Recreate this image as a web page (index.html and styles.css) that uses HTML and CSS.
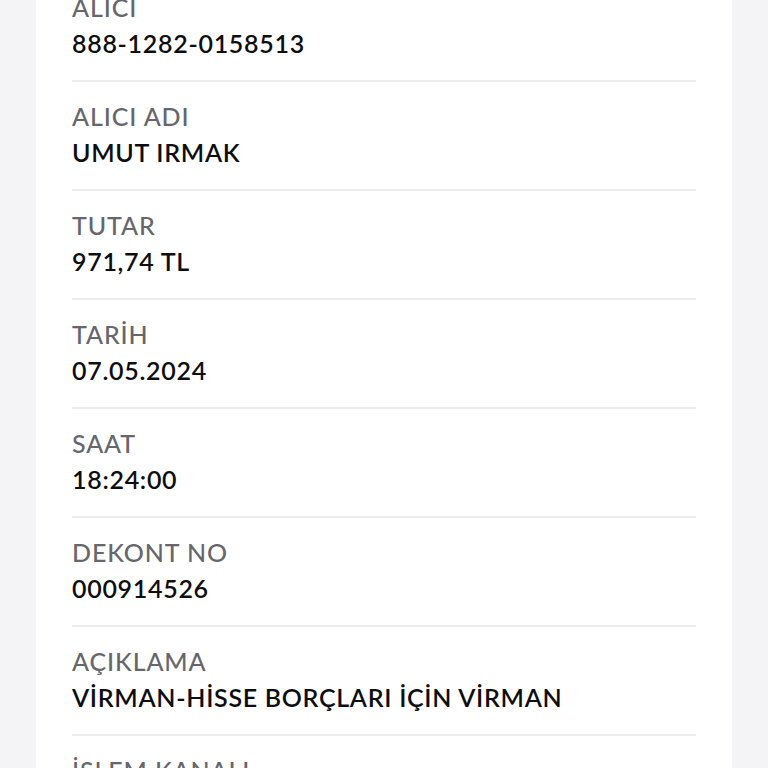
FILE: index.html
```html
<!DOCTYPE html>
<html lang="tr">
<head>
  <meta charset="UTF-8" />
  <meta name="viewport" content="width=device-width, initial-scale=1.0"/>
  <title>Dekont</title>
  <link rel="stylesheet" href="styles.css">
</head>
<body>

<div class="card">
  <div class="detail-list">
    <div class="detail">
      <div class="detail-label">ALICI</div>
      <div class="detail-value">888-1282-0158513</div>
    </div>
    <div class="detail">
      <div class="detail-label">ALICI ADI</div>
      <div class="detail-value">UMUT IRMAK</div>
    </div>
    <div class="detail">
      <div class="detail-label">TUTAR</div>
      <div class="detail-value">971,74 TL</div>
    </div>
    <div class="detail">
      <div class="detail-label">TARİH</div>
      <div class="detail-value">07.05.2024</div>
    </div>
    <div class="detail">
      <div class="detail-label">SAAT</div>
      <div class="detail-value">18:24:00</div>
    </div>
    <div class="detail">
      <div class="detail-label">DEKONT NO</div>
      <div class="detail-value">000914526</div>
    </div>
    <div class="detail">
      <div class="detail-label">AÇIKLAMA</div>
      <div class="detail-value">VİRMAN-HİSSE BORÇLARI İÇİN VİRMAN</div>
    </div>
    <div class="detail">
      <div class="detail-label">İŞLEM KANALI</div>
      <div class="detail-value">MOBİL</div>
    </div>
  </div>
</div>

</body>
</html>
```

FILE: styles.css
```css
:root {
  --bg: #f4f4f6;
  --card: #fff;
  --label: #66666c;
  --value: #0e0e10;
  --line: #ececee;
  --font: 'Lato', 'Noto Sans', sans-serif;
}

* {
  box-sizing: border-box;
  margin: 0;
  padding: 0;
  font-family: var(--font);
}

html, body {
  height: 100%;
}

body {
  background-color: var(--bg);
  overflow: hidden;
  padding: 0 36px;
}

.card {
  background: var(--card);
  min-height: 100%;
  padding: 0 36px;
}

/* list is scrolled a bit, first row starts above the fold */
.detail-list {
  margin-top: -27px;
}

.detail {
  padding: 16px 0 19px;
  border-bottom: 2px solid var(--line);
}

.detail-label,
.detail-value {
  font-size: 25px;
  line-height: 36px;
  letter-spacing: 0.7px;
  white-space: nowrap;
}

.detail-label {
  color: var(--label);
  font-weight: 500;
  letter-spacing: 0.9px;
}

.detail-value {
  color: var(--value);
  font-weight: 600;
}
```
